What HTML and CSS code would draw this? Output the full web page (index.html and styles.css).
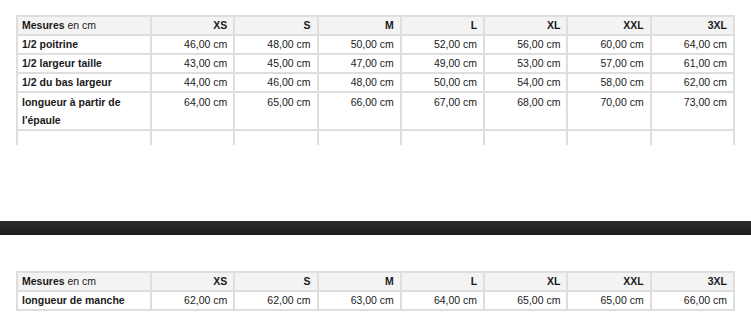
FILE: index.html
```html
<!DOCTYPE html>
<html lang="fr">
<head>
<meta charset="utf-8">
<link rel="stylesheet" href="styles.css">
</head>
<body>
<div class="clip">
<table class="sizes">
<colgroup><col class="first"><col><col><col><col><col><col><col></colgroup>
<tr class="head"><td><b>Mesures</b> en cm</td><td>XS</td><td>S</td><td>M</td><td>L</td><td>XL</td><td>XXL</td><td>3XL</td></tr>
<tr><td class="lbl">1/2 poitrine</td><td>46,00 cm</td><td>48,00 cm</td><td>50,00 cm</td><td>52,00 cm</td><td>56,00 cm</td><td>60,00 cm</td><td>64,00 cm</td></tr>
<tr><td class="lbl">1/2 largeur taille</td><td>43,00 cm</td><td>45,00 cm</td><td>47,00 cm</td><td>49,00 cm</td><td>53,00 cm</td><td>57,00 cm</td><td>61,00 cm</td></tr>
<tr><td class="lbl">1/2 du bas largeur</td><td>44,00 cm</td><td>46,00 cm</td><td>48,00 cm</td><td>50,00 cm</td><td>54,00 cm</td><td>58,00 cm</td><td>62,00 cm</td></tr>
<tr><td class="lbl">longueur à partir de l'épaule</td><td>64,00 cm</td><td>65,00 cm</td><td>66,00 cm</td><td>67,00 cm</td><td>68,00 cm</td><td>70,00 cm</td><td>73,00 cm</td></tr>
<tr class="empty"><td></td><td></td><td></td><td></td><td></td><td></td><td></td><td></td></tr>
</table>
</div>
<div class="band"></div>
<div class="second">
<table class="sizes">
<colgroup><col class="first"><col><col><col><col><col><col><col></colgroup>
<tr class="head"><td><b>Mesures</b> en cm</td><td>XS</td><td>S</td><td>M</td><td>L</td><td>XL</td><td>XXL</td><td>3XL</td></tr>
<tr><td class="lbl">longueur de manche</td><td>62,00 cm</td><td>62,00 cm</td><td>63,00 cm</td><td>64,00 cm</td><td>65,00 cm</td><td>65,00 cm</td><td>66,00 cm</td></tr>
</table>
</div>
</body>
</html>
```
FILE: styles.css
```css
html, body {
  margin: 0;
  padding: 0;
  background: #fff;
}
body {
  font-family: "Liberation Sans", Arial, sans-serif;
  font-size: 10.5px;
  color: #1a1a1a;
}
.clip {
  margin: 15px 0 0 16px;
  width: 719px;
  height: 130px;
  overflow: hidden;
}
.sizes {
  border-collapse: collapse;
  table-layout: fixed;
  width: 719px;
}
.sizes col.first {
  width: 134px;
}
.sizes td {
  border: 2px solid #dedede;
  padding: 0 6px 0 4px;
  line-height: 17px;
  text-align: right;
  vertical-align: top;
}
.sizes td:first-child {
  text-align: left;
}
.sizes .head td {
  background: #f3f3f3;
  font-weight: bold;
}
.sizes .head td:first-child {
  font-weight: normal;
}
.sizes .lbl {
  font-weight: bold;
}
.sizes tr:nth-child(5) td {
  line-height: 18px;
}
.sizes .empty td {
  height: 17px;
}
.band {
  margin-top: 76px;
  height: 14px;
  background: linear-gradient(#2c2c2c, #1c1c1c);
}
.second {
  margin: 36px 0 0 16px;
}
```
